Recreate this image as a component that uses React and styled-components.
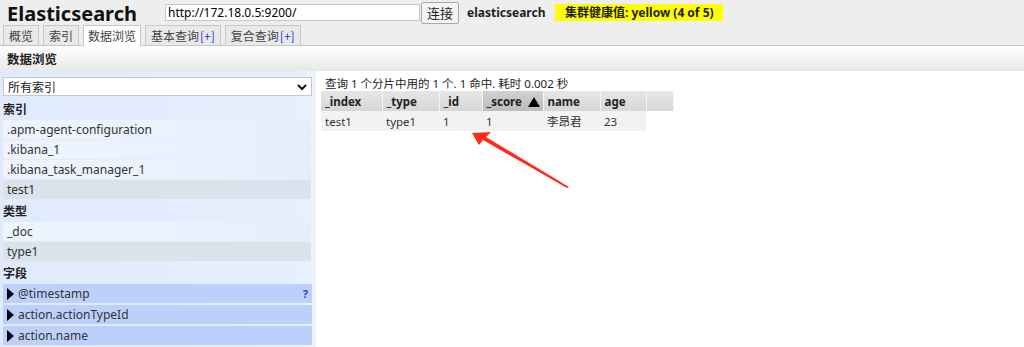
import React from 'react';
import styled, { createGlobalStyle } from 'styled-components';

const GlobalStyle = createGlobalStyle`
    html, body {
        margin: 0;
        padding: 0;
        background: #fff;
        font-family: "Noto Sans", "Noto Sans CJK SC", sans-serif;
        font-size: 12px;
        color: #222;
    }
`

const Page = styled.div`
    width: 1024px;
    height: 347px;
    overflow: hidden;
    position: relative;
`

const Header = styled.div`
    background: #eeeeee;
    border-bottom: 1px solid #c8c8c8;
`

const TopBar = styled.div`
    display: flex;
    align-items: center;
    height: 25px;
    padding-left: 7px;
`

const Logo = styled.div`
    font-size: 20px;
    font-weight: bold;
    color: #111;
    width: 158px;
    line-height: 27px;
    height: 25px;
`

const UrlInput = styled.input`
    width: 249px;
    height: 15px;
    border: 1px solid #c7c7c7;
    padding: 0 2px;
    font-family: "Noto Sans", sans-serif;
    font-size: 12px;
    margin: 0;
`

const ConnectButton = styled.button`
    height: 22px;
    width: 38px;
    margin-left: 1px;
    border: 1px solid #a8a8a8;
    border-radius: 2px;
    background: #f4f4f4;
    font-family: "Noto Sans CJK SC", sans-serif;
    font-size: 13px;
    padding: 0;
    color: #222;
`

const ClusterName = styled.span`
    font-weight: bold;
    font-size: 12px;
    margin-left: 8px;
    width: 88px;
`

const Health = styled.span`
    background: #ffff00;
    font-weight: bold;
    font-size: 12px;
    padding: 0 9px 0 10px;
    height: 17px;
    line-height: 17px;
`

const Tabs = styled.div`
    display: flex;
    align-items: flex-end;
    gap: 4px;
    padding-left: 3px;
    height: 20px;
`

const Tab = styled.div`
    height: ${(p) => (p.active ? '20px' : '19px')};
    line-height: 20px;
    padding: 0 ${(p) => (p.active ? '4px' : '5px')};
    border: 1px solid #c8c8c8;
    border-bottom: none;
    background: ${(p) => (p.active ? '#ffffff' : '#e9e9e9')};
    color: #444;
    font-family: "Noto Sans CJK SC", sans-serif;
    font-size: 12px;
    margin-bottom: ${(p) => (p.active ? '-1px' : '0')};
`

const Plus = styled.span`
    color: #2233dd;
    margin-left: 1px;
`

const SectionTitle = styled.div`
    height: 25px;
    line-height: 25px;
    padding-left: 7px;
    font-weight: bold;
    font-size: 12.5px;
    font-family: "Noto Sans CJK SC", sans-serif;
    color: #222;
    background: linear-gradient(#ffffff, #e8e8e8);
`

const Body = styled.div`
    display: flex;
    align-items: flex-start;
`

const Side = styled.div`
    width: 311px;
    height: 290px;
    padding: 6px 2px 0 3px;
    background: linear-gradient(to right, #dfeafc, #e6effd 95%, #edf3fe);
    box-sizing: content-box;
`

const Select = styled.div`
    height: 17px;
    border: 1px solid #c7c7c7;
    background: #fff;
    display: flex;
    align-items: center;
    justify-content: space-between;
    padding: 0 4px;
    margin-bottom: 2px;
    font-family: "Noto Sans CJK SC", sans-serif;
    font-size: 12px;
    color: #222;
    width: 299px;
`

const GroupTitle = styled.div`
    font-weight: bold;
    font-family: "Noto Sans CJK SC", sans-serif;
    font-size: 12px;
    height: 22px;
    line-height: 22px;
`

const Item = styled.div`
    height: 19px;
    line-height: 19px;
    padding-left: 4px;
    margin-bottom: 1px;
    width: 304px;
    border-radius: 3px;
    color: #333;
    font-size: 12px;
    background: ${(p) =>
        p.selected
            ? '#dae2ec'
            : 'linear-gradient(to right, #eef4fe, #e9f1fd 70%, #e3edfc)'};
`

const Field = styled.div`
    display: flex;
    align-items: center;
    height: 19px;
    margin-bottom: 2px;
    width: 309px;
    background: #bdd0fb;
    font-size: 12px;
    color: #333;
    padding-left: 4px;
    box-sizing: border-box;
`

const Caret = styled.span`
    width: 0;
    height: 0;
    border-top: 6px solid transparent;
    border-bottom: 6px solid transparent;
    border-left: 7px solid #000;
    margin-right: 4px;
`

const Help = styled.span`
    margin-left: auto;
    margin-right: 4px;
    color: #2a3bd8;
    font-weight: bold;
    font-size: 11px;
`

const Main = styled.div`
    padding: 6px 0 0 5px;
`

const Summary = styled.div`
    padding-left: 4px;
    height: 14px;
    line-height: 14px;
    font-size: 11.5px;
    font-family: "Noto Sans", "Noto Sans CJK SC", sans-serif;
    color: #222;
`

const Table = styled.table`
    border-collapse: collapse;
    table-layout: fixed;
    font-size: 11.5px;
    width: 352px;
`

const Th = styled.th`
    height: 20px;
    padding: 0 4px;
    text-align: left;
    font-weight: bold;
    color: #222;
    width: ${(p) => p.w}px;
    box-sizing: border-box;
    background: ${(p) =>
        p.sorted
            ? 'linear-gradient(#d0d0d0, #bdbdbd)'
            : 'linear-gradient(#e6e6e6, #d6d6d6)'};
    border-right: 1px solid #f4f4f4;
    white-space: nowrap;
    overflow: hidden;
`

const SortArrow = styled.span`
    display: inline-block;
    width: 0;
    height: 0;
    border-left: 6px solid transparent;
    border-right: 6px solid transparent;
    border-bottom: 10px solid #000;
    margin-left: 6px;
    vertical-align: -1px;
`

const Td = styled.td`
    height: 20px;
    padding: 0 4px;
    background: #f2f2f2;
    color: #333;
    font-family: "Noto Sans", "Noto Sans CJK SC", sans-serif;
    white-space: nowrap;
`

const BlankTd = styled.td`
    background: transparent;
`

const Annotation = styled.svg`
    position: absolute;
    left: 460px;
    top: 125px;
    pointer-events: none;
`

const columns = [
    { name: '_index', w: 61 },
    { name: '_type', w: 57 },
    { name: '_id', w: 43 },
    { name: '_score', w: 61, sorted: true },
    { name: 'name', w: 57 },
    { name: 'age', w: 46 },
]

const row = ['test1', 'type1', '1', '1', '李昂君', '23']

const indices = ['.apm-agent-configuration', '.kibana_1', '.kibana_task_manager_1']
const fields = ['@timestamp', 'action.actionTypeId', 'action.name']

export default function App() {
    return (
        <Page>
            <GlobalStyle />
            <Header>
                <TopBar>
                    <Logo>Elasticsearch</Logo>
                    <UrlInput defaultValue="http://172.18.0.5:9200/" />
                    <ConnectButton>连接</ConnectButton>
                    <ClusterName>elasticsearch</ClusterName>
                    <Health>集群健康值: yellow (4 of 5)</Health>
                </TopBar>
                <Tabs>
                    <Tab>概览</Tab>
                    <Tab>索引</Tab>
                    <Tab active>数据浏览</Tab>
                    <Tab>基本查询<Plus>[+]</Plus></Tab>
                    <Tab>复合查询<Plus>[+]</Plus></Tab>
                </Tabs>
            </Header>
            <SectionTitle>数据浏览</SectionTitle>
            <Body>
                <Side>
                    <Select>
                        <span>所有索引</span>
                        <svg width="10" height="8" viewBox="0 0 10 8">
                            <path d="M1 2 L5 6 L9 2" fill="none" stroke="#111" strokeWidth="2" />
                        </svg>
                    </Select>
                    <GroupTitle>索引</GroupTitle>
                    {indices.map((name) => (
                        <Item key={name}>{name}</Item>
                    ))}
                    <Item selected>test1</Item>
                    <GroupTitle>类型</GroupTitle>
                    <Item>_doc</Item>
                    <Item selected>type1</Item>
                    <GroupTitle>字段</GroupTitle>
                    {fields.map((name, i) => (
                        <Field key={name}>
                            <Caret />
                            {name}
                            {i === 0 && <Help>?</Help>}
                        </Field>
                    ))}
                </Side>
                <Main>
                    <Summary>查询 1 个分片中用的 1 个. 1 命中. 耗时 0.002 秒</Summary>
                    <Table>
                        <thead>
                            <tr>
                                {columns.map((c) => (
                                    <Th key={c.name} w={c.w} sorted={c.sorted}>
                                        {c.name}
                                        {c.sorted && <SortArrow />}
                                    </Th>
                                ))}
                                <Th w={27} />
                            </tr>
                        </thead>
                        <tbody>
                            <tr>
                                {row.map((v, i) => (
                                    <Td key={i}>{v}</Td>
                                ))}
                                <BlankTd />
                            </tr>
                        </tbody>
                    </Table>
                </Main>
            </Body>
            <Annotation width="120" height="70" viewBox="0 0 120 70">
                <path d="M12 8 L31 7 L26 12 L109 62 L107 63 L23 15 L19 20 Z" fill="#ff2a1a" />
            </Annotation>
        </Page>
    );
}
